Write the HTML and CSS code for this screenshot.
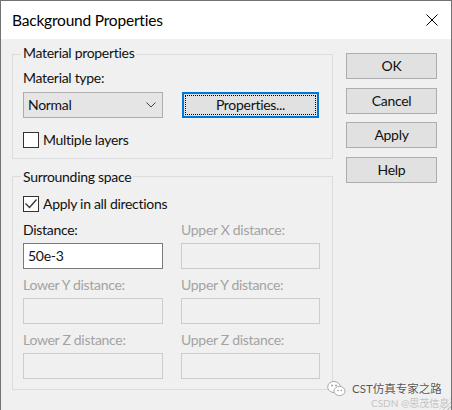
FILE: index.html
```html
<!DOCTYPE html>
<html>
<head>
<meta charset="utf-8">
<link rel="stylesheet" href="styles.css">
</head>
<body>
<div class="window">
  <div class="titlebar">
    <span class="title">Background Properties</span>
    <svg class="close" width="12" height="12" viewBox="0 0 12 12"><path d="M0.5 0.5 L11.5 11.5 M11.5 0.5 L0.5 11.5" stroke="#000" stroke-width="1" fill="none"/></svg>
  </div>
  <div class="body">
    <div class="main">
      <div class="group g1">
        <div class="legend">Material properties</div>
        <div class="label l-type">Material type:</div>
        <div class="row">
          <div class="combo">
            <span>Normal</span>
            <svg class="chev" width="10" height="6" viewBox="0 0 10 6"><polyline points="0.5,0.5 5,5 9.5,0.5" fill="none" stroke="#444" stroke-width="1"/></svg>
          </div>
          <div class="btn default"><span class="focus">Properties...</span></div>
        </div>
        <div class="check c1"><span class="box"></span><span>Multiple layers</span></div>
      </div>
      <div class="group g2">
        <div class="legend">Surrounding space</div>
        <div class="check c2"><span class="box"><svg width="14" height="14" viewBox="0 0 14 14"><polyline points="1.5,6.5 5.5,10.5 12.5,2.5" fill="none" stroke="#333" stroke-width="1.3"/></svg></span><span>Apply in all directions</span></div>
        <div class="fields">
          <div class="field"><div class="label">Distance:</div><div class="input">50e-3</div></div>
          <div class="field disabled"><div class="label">Upper X distance:</div><div class="input"></div></div>
          <div class="field disabled"><div class="label">Lower Y distance:</div><div class="input"></div></div>
          <div class="field disabled"><div class="label">Upper Y distance:</div><div class="input"></div></div>
          <div class="field disabled"><div class="label">Lower Z distance:</div><div class="input"></div></div>
          <div class="field disabled"><div class="label">Upper Z distance:</div><div class="input"></div></div>
        </div>
      </div>
    </div>
    <div class="buttons">
      <div class="btn">OK</div>
      <div class="btn">Cancel</div>
      <div class="btn">Apply</div>
      <div class="btn">Help</div>
    </div>
  </div>
  <div class="watermark">
    <div class="wm-line1">
      <svg class="wechat" width="19" height="17" viewBox="0 0 19 17"><ellipse cx="7" cy="7" rx="6.3" ry="5.5" fill="#fff" stroke="#aaa" stroke-width="1"/><ellipse cx="12.5" cy="11" rx="5.5" ry="4.6" fill="#fff" stroke="#aaa" stroke-width="1"/><circle cx="5" cy="5.5" r="0.9" fill="#999"/><circle cx="9" cy="5.5" r="0.9" fill="#999"/><circle cx="11" cy="10.5" r="0.8" fill="#999"/><circle cx="14.3" cy="10.5" r="0.8" fill="#999"/></svg>
      <span class="wm-text">CST仿真专家之路</span>
    </div>
    <div class="wm-line2">CSDN @思茂信息</div>
  </div>
  <div class="grip"></div>
</div>
</body>
</html>
```
FILE: styles.css
```css
html, body {
  margin: 0;
  padding: 0;
  background: #f0f0f0;
}
body {
  font-family: Lato, "Noto Sans CJK SC", sans-serif;
  font-size: 14px;
  letter-spacing: -0.3px;
  line-height: 18px;
  color: #111;
}
.window {
  position: relative;
  width: 452px;
  height: 410px;
  box-sizing: border-box;
  border: 1px solid #737373;
  border-bottom: none;
  background: #f0f0f0;
  overflow: hidden;
}
.titlebar {
  height: 38px;
  background: #fff;
  display: flex;
  align-items: center;
  justify-content: space-between;
  padding: 0 13px 0 11px;
}
.title {
  font-size: 15.5px;
  letter-spacing: -0.2px;
  line-height: 20px;
  color: #000;
}
.close {
  display: block;
}
.body {
  display: flex;
  padding-left: 11px;
}
.main {
  width: 321px;
  display: flex;
  flex-direction: column;
}
.group {
  box-sizing: border-box;
  width: 321px;
  border: 1px solid #dcdcdc;
  padding: 0 10px;
  display: flex;
  flex-direction: column;
  align-items: flex-start;
}
.g1 {
  margin-top: 15px;
  padding-bottom: 9px;
}
.g2 {
  margin-top: 17px;
  padding-bottom: 10px;
}
.legend {
  background: #f0f0f0;
  padding: 0 2px;
  margin-left: -2px;
}
.g1 .legend { margin-top: -11px; }
.g2 .legend { margin-top: -9px; }
.l-type {
  margin-top: 7px;
}
.row {
  display: flex;
  gap: 19px;
  margin-top: 5px;
}
.combo {
  box-sizing: border-box;
  width: 140px;
  height: 26px;
  background: #e5e5e5;
  border: 1px solid #adadad;
  display: flex;
  align-items: center;
  justify-content: space-between;
  padding: 0 6px 0 4px;
}
.chev { display: block; }
.btn {
  box-sizing: border-box;
  height: 26px;
  background: #e1e1e1;
  border: 1px solid #adadad;
  display: flex;
  align-items: center;
  justify-content: center;
}
.btn.default {
  width: 137px;
  border-color: #0078d7;
  box-shadow: inset 0 0 0 1px #0078d7;
  padding: 2px;
}
.focus {
  box-sizing: border-box;
  width: 100%;
  height: 100%;
  border: 1px dotted #000;
  display: flex;
  align-items: center;
  justify-content: center;
}
.check {
  display: flex;
  align-items: center;
  gap: 4px;
  height: 18px;
}
.c1 { margin-top: 13px; }
.c2 { margin-top: 9px; }
.box {
  box-sizing: border-box;
  width: 16px;
  height: 16px;
  background: #fff;
  border: 1px solid #333;
  display: flex;
  align-items: center;
  justify-content: center;
}
.box svg { display: block; }
.fields {
  margin-top: 8px;
  display: grid;
  grid-template-columns: 140px 139px;
  column-gap: 18px;
  row-gap: 7px;
}
.field {
  display: flex;
  flex-direction: column;
  gap: 4px;
}
.input {
  box-sizing: border-box;
  height: 26px;
  background: #fff;
  border: 1px solid #7a7a7a;
  padding: 0 4px;
  display: flex;
  align-items: center;
}
.disabled .label { color: #a3a3a3; }
.disabled .input {
  background: #f0f0f0;
  border-color: #cccccc;
}
.buttons {
  margin-left: 13px;
  padding-top: 14px;
  width: 91px;
  display: flex;
  flex-direction: column;
  gap: 8.5px;
}
.watermark {
  position: absolute;
  left: 326px;
  top: 379px;
  display: flex;
  flex-direction: column;
}
.wm-line1 {
  display: flex;
  align-items: center;
  gap: 6px;
}
.wechat { display: block; }
.wm-text {
  font-size: 11.5px;
  letter-spacing: 0;
  line-height: 14px;
  color: #555;
  text-shadow: 0 0 1px #fff, 0 0 1px #fff;
}
.wm-line2 {
  margin-left: 44px;
  font-size: 10px;
  letter-spacing: 0;
  line-height: 12px;
  color: #c4c4c4;
}
.grip {
  position: absolute;
  right: 0;
  bottom: 0;
  width: 12px;
  height: 12px;
  background: repeating-linear-gradient(135deg, transparent 0 2px, #c8c8c8 2px 3px);
  clip-path: polygon(100% 0, 100% 100%, 0 100%);
}
```
